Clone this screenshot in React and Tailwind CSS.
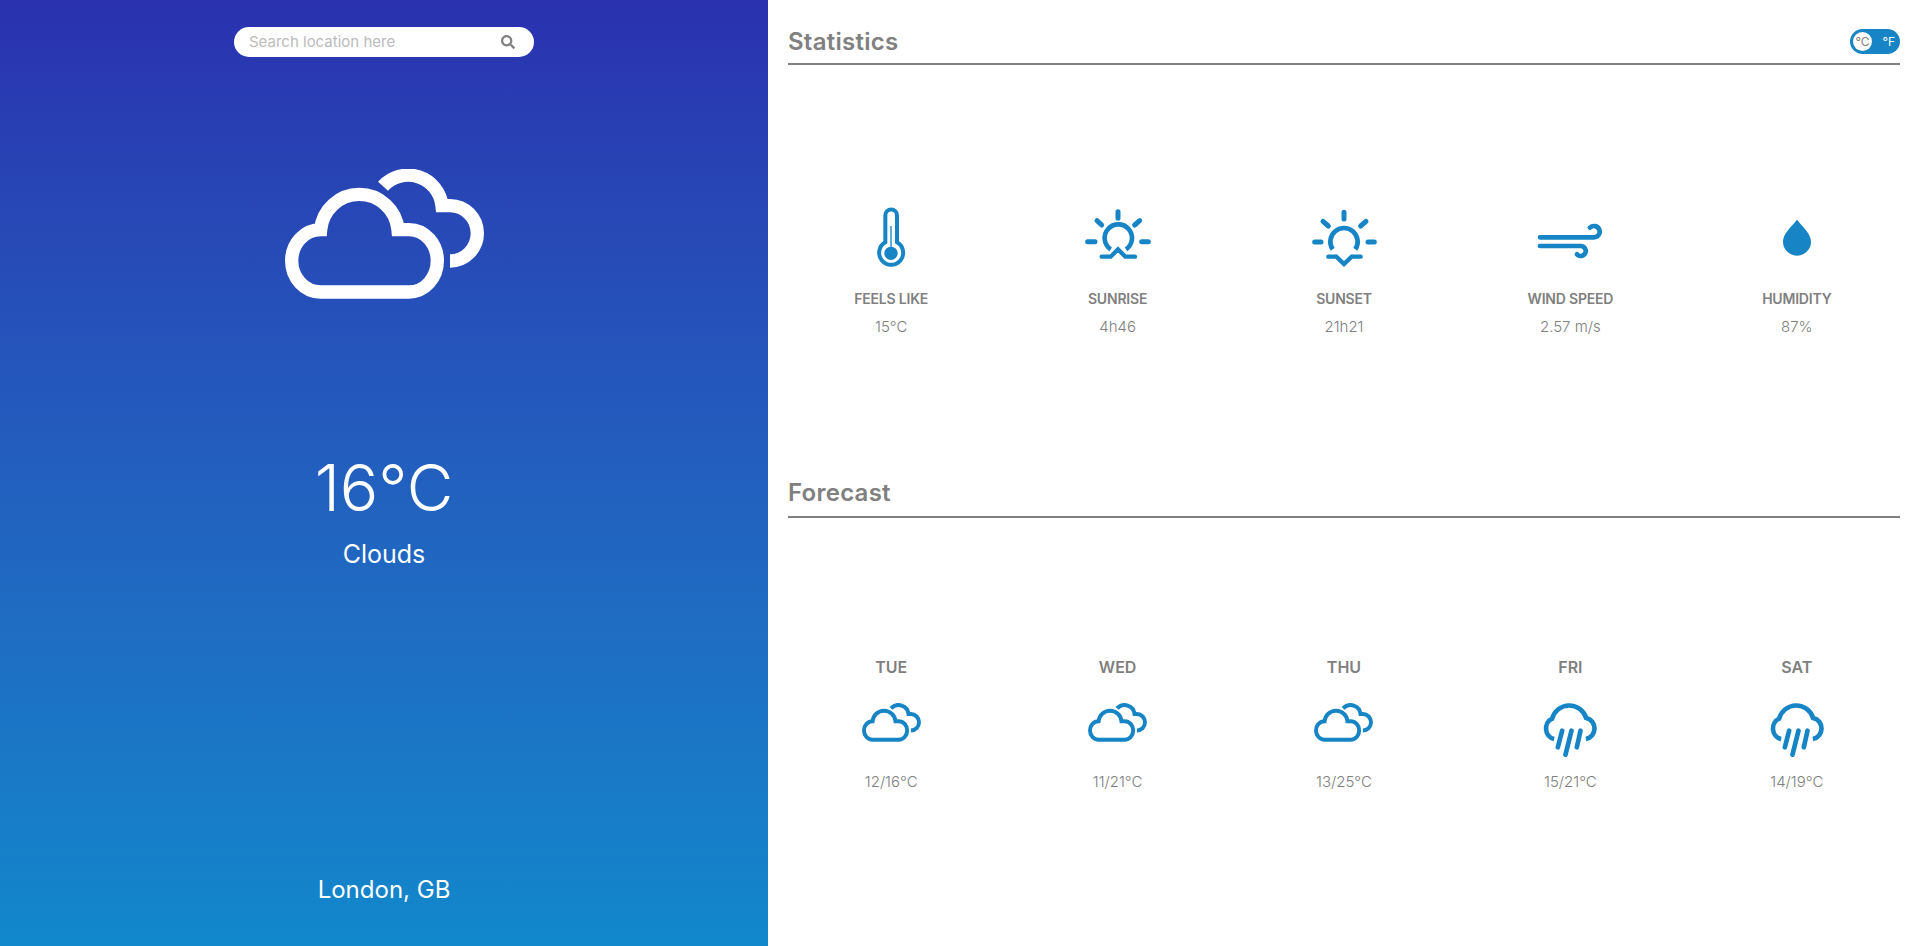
import React from "react";
import { FaSearch } from "react-icons/fa";

function Clouds({ className }) {
  return (
    <svg viewBox="43 58 597 390" className={className} fill="none" stroke="currentColor" strokeWidth="40">
      <path d="M150 427A87 93.5 0 0 1 150 240A116.5 116.5 0 0 1 382 240H415A85 93.5 0 0 1 415 427Z" />
      <path d="M337 110A102 102 0 0 1 514 168H538A82 83 0 0 1 538 334" />
    </svg>
  );
}

function Rain({ className }) {
  return (
    <svg viewBox="98 160 167 162" className={className} fill="none" stroke="currentColor" strokeWidth="14" strokeLinecap="round">
      <path d="M134 268A30 32 0 0 1 128 207A53 53 0 0 1 230 205A31 32 0 0 1 229 268" strokeLinecap="butt" />
      <path d="M158 243L145 293M186 243L168 315M213 243L202 293" />
    </svg>
  );
}

function Glyph({ box, children }) {
  return (
    <svg viewBox={box} className="w-20 h-20 text-[#1785c5]" fill="none" stroke="currentColor" strokeWidth="15" strokeLinecap="round">
      {children}
    </svg>
  );
}

const stats = [
  {
    label: "FEELS LIKE",
    value: "15°C",
    icon: (
      <Glyph box="213 30 240 240">
        <path strokeWidth="12" d="M316 157V76A17 17 0 0 1 351 76V157A36 36 0 1 1 316 157Z" />
        <circle cx="333" cy="190" r="20" fill="currentColor" stroke="none" />
        <path strokeWidth="4" strokeLinecap="butt" d="M333 108V172" />
      </Glyph>
    ),
  },
  {
    label: "SUNRISE",
    value: "4h46",
    icon: (
      <Glyph box="894 30 240 240">
        <path d="M1014 65V85M951 92L965 105M1079 92L1064 105M923 155H945M1085 155H1105" />
        <path strokeWidth="14" strokeLinecap="butt" d="M992 178A41 41 0 1 1 1038 178" />
        <path strokeWidth="13" d="M965 200H992L1014 178L1036 200H1065" />
      </Glyph>
    ),
  },
  {
    label: "SUNSET",
    value: "21h21",
    icon: (
      <Glyph box="311 30 240 240">
        <path d="M431 67V87M368 94L384 108M497 94L481 108M343 156H362M503 156H522" />
        <path strokeWidth="14" strokeLinecap="butt" d="M397 178A41 41 0 1 1 465 178" />
        <path strokeWidth="13" d="M384 200H408L431 222L454 200H481" />
      </Glyph>
    ),
  },
  {
    label: "WIND SPEED",
    value: "2.57 m/s",
    icon: (
      <Glyph box="30 30 240 240">
        <path strokeWidth="14" d="M60 142H222A17 17 0 1 0 210 113M60 168H182A15 15 0 1 1 171 193" />
      </Glyph>
    ),
  },
  {
    label: "HUMIDITY",
    value: "87%",
    icon: (
      <Glyph box="711 30 240 240">
        <path fill="currentColor" stroke="none" d="M831 89C815 110 789 130 789 155A42 42 0 0 0 873 155C873 130 847 110 831 89Z" />
      </Glyph>
    ),
  },
];

const forecast = [
  ["TUE", "12/16°C", "c"],
  ["WED", "11/21°C", "c"],
  ["THU", "13/25°C", "c"],
  ["FRI", "15/21°C", "r"],
  ["SAT", "14/19°C", "r"],
];

function Heading({ children, right, className }) {
  return (
    <div className={"mx-[10px] flex items-start justify-between border-b-2 border-[#808080] " + className}>
      <h2 className="text-[24px] leading-[36px] font-semibold text-[#808080] tracking-[0.25px]">{children}</h2>
      {right}
    </div>
  );
}

export default function App() {
  return (
    <div className="flex w-full h-[946px] overflow-hidden bg-white font-['Inter',sans-serif]">
      <div className="w-[768px] shrink-0 flex flex-col items-center bg-gradient-to-b from-[#2a31af] to-[#1188cc] text-white">
        <div className="mt-[27px] w-[300px] h-[30px] bg-white rounded-full flex items-center pl-[15px] pr-[19px]">
          <input
            placeholder="Search location here"
            className="flex-1 min-w-0 outline-none bg-transparent text-[15px] text-[#808080] placeholder:text-[#bbbbbb]"
          />
          <FaSearch className="w-[14px] h-[14px] text-[#808080]" />
        </div>
        <Clouds className="mt-[112px] w-[199px] h-[130px] text-white" />
        <div className="mt-[149px] text-[64px] leading-[80px] font-light">16°C</div>
        <div className="mt-[8px] text-[25px] leading-[36px]">Clouds</div>
        <div className="mt-auto mb-[38px] text-[24px] leading-[36px]">London, GB</div>
      </div>
      <div className="flex-1 min-w-0 px-[10px] pt-[23px]">
        <Heading
          className="h-[42px] pt-[1px]"
          right={
            <div className="mt-[5px] w-[50px] h-[25px] rounded-full bg-[#1785c5] flex items-center justify-between pl-[3px] pr-[5px] text-[12px]">
              <span className="w-[19px] h-[19px] rounded-full bg-white text-[#808080] flex items-center justify-center">°C</span>
              <span className="text-white">°F</span>
            </div>
          }
        >
          Statistics
        </Heading>
        <div className="grid grid-cols-5 mt-[135px]">
          {stats.map((s) => (
            <div key={s.label} className="flex flex-col items-center">
              {s.icon}
              <div className="mt-[8px] text-[14px] leading-[21px] font-semibold tracking-[-0.2px] text-[#808080]">{s.label}</div>
              <div className="mt-[7px] text-[15px] leading-[21px] font-light text-[#808080]">{s.value}</div>
            </div>
          ))}
        </div>
        <Heading className="mt-[136px] h-[45px] pt-[2px]">Forecast</Heading>
        <div className="grid grid-cols-5 mt-[137px]">
          {forecast.map(([d, t, k]) => (
            <div key={d} className="flex flex-col items-center">
              <div className="text-[16px] leading-[24px] font-semibold text-[#808080]">{d}</div>
              <div className="h-[64px] mt-[18px] flex items-start justify-center text-[#1785c5]">
                {k === "c" ? <Clouds className="mt-[6px] w-[59px] h-[39px]" /> : <Rain className="mt-[6px] w-[56px] h-[54px]" />}
              </div>
              <div className="mt-[10px] text-[15px] leading-[21px] font-light text-[#808080]">{t}</div>
            </div>
          ))}
        </div>
      </div>
    </div>
  );
}
